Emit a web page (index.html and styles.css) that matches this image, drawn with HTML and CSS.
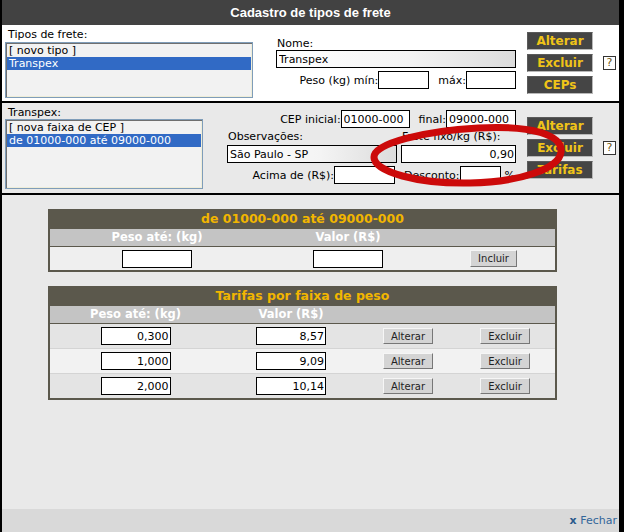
FILE: index.html
```html
<!DOCTYPE html>
<html lang="pt-BR">
<head>
<meta charset="utf-8">
<title>Cadastro de tipos de frete</title>
<link rel="stylesheet" href="styles.css">
</head>
<body>
<div class="window">
  <div class="titlebar">Cadastro de tipos de frete</div>

  <div class="sec sec1">
    <div class="listcol lc1">
      <div class="lbl">Tipos de frete:</div>
      <div class="listbox lb1">
        <div class="opt">[ novo tipo ]</div>
        <div class="opt sel">Transpex</div>
      </div>
    </div>
    <div class="form1">
      <div class="lbl">Nome:</div>
      <input class="txt nome grad" type="text" value="Transpex">
      <div class="row right r2">
        <span>Peso (kg) mín:</span><input class="txt w51" type="text" value="">
        <span class="ml">máx:</span><input class="txt w50" type="text" value="">
      </div>
    </div>
    <div class="btncol bc1">
      <button class="dbtn">Alterar</button>
      <button class="dbtn">Excluir</button>
      <button class="dbtn">CEPs</button>
    </div>
    <span class="help h1">?</span>
  </div>

  <div class="sec sec2">
    <div class="listcol lc2">
      <div class="lbl">Transpex:</div>
      <div class="listbox lb2">
        <div class="opt">[ nova faixa de CEP ]</div>
        <div class="opt sel">de 01000-000 até 09000-000</div>
      </div>
    </div>
    <div class="form2">
      <div class="row right">
        <span>CEP inicial:</span><input class="txt w69" type="text" value="01000-000">
        <span class="ml">final:</span><input class="txt w70" type="text" value="09000-000">
      </div>
      <div class="row rb">
        <div class="fld obs">
          <div class="lbl">Observações:</div>
          <input class="txt grad w170" type="text" value="São Paulo - SP">
        </div>
        <div class="fld frete">
          <div class="lbl">Frete fixo/kg (R$):</div>
          <input class="txt num w115" type="text" value="0,90">
        </div>
      </div>
      <div class="row right rc">
        <span>Acima de (R$):</span><input class="txt w61" type="text" value="">
        <span class="ml">Desconto:</span><input class="txt w41" type="text" value="">
        <span class="pct">%</span>
      </div>
    </div>
    <div class="btncol bc2">
      <button class="dbtn">Alterar</button>
      <button class="dbtn">Excluir</button>
      <button class="dbtn">Tarifas</button>
    </div>
    <span class="help h2">?</span>
  </div>

  <div class="sec sec3">
    <div class="tbl">
      <div class="thead">de 01000-000 até 09000-000</div>
      <div class="grid g3 sub"><div>Peso até: (kg)</div><div>Valor (R$)</div><div></div></div>
      <div class="grid g3 trow t1row">
        <input class="txt tnum" type="text" value="">
        <input class="txt tnum" type="text" value="">
        <button class="sbtn inc">Incluir</button>
      </div>
    </div>

    <div class="tbl tbl2">
      <div class="thead">Tarifas por faixa de peso</div>
      <div class="grid g4 sub"><div>Peso até: (kg)</div><div>Valor (R$)</div><div></div><div></div></div>
      <div class="grid g4 trow odd">
        <input class="txt tnum" type="text" value="0,300">
        <input class="txt tnum" type="text" value="8,57">
        <button class="sbtn">Alterar</button>
        <button class="sbtn">Excluir</button>
      </div>
      <div class="grid g4 trow even">
        <input class="txt tnum" type="text" value="1,000">
        <input class="txt tnum" type="text" value="9,09">
        <button class="sbtn">Alterar</button>
        <button class="sbtn">Excluir</button>
      </div>
      <div class="grid g4 trow odd">
        <input class="txt tnum" type="text" value="2,000">
        <input class="txt tnum" type="text" value="10,14">
        <button class="sbtn">Alterar</button>
        <button class="sbtn">Excluir</button>
      </div>
    </div>
  </div>

  <div class="footer"><b class="x">x</b>&nbsp;Fechar</div>

  <svg class="mark" width="624" height="532" viewBox="0 0 624 532" aria-hidden="true">
    <path d="M 374 157 C 374 143, 425 131, 478 128 C 532 125, 563 135, 561 152 C 559 169, 520 182, 470 183 C 418 184, 374 172, 374 157 Z" fill="none" stroke="#cc0a0a" stroke-width="7"/>
  </svg>
</div>
</body>
</html>
```
FILE: styles.css
```css
* { box-sizing: border-box; }
html, body { margin: 0; padding: 0; }
body {
  width: 624px;
  height: 532px;
  overflow: hidden;
  background: #fff;
  font-family: "DejaVu Sans", Verdana, sans-serif;
  font-size: 11px;
  line-height: 13px;
  color: #000;
}
.window {
  position: relative;
  width: 624px;
  height: 532px;
  border-left: 2px solid #000;
  border-right: 5px solid #000;
  display: flex;
  flex-direction: column;
}
.titlebar {
  height: 25px;
  flex: none;
  background: #424242;
  color: #fff;
  font-family: "Liberation Sans", Arial, sans-serif;
  font-weight: bold;
  font-size: 13px;
  line-height: 25px;
  text-align: center;
}
.sec { flex: none; display: flex; align-items: flex-start; }
.sec1 { height: 78px; background: #fff; border-bottom: 2px solid #000; }
.sec2 { height: 92px; background: #e9e9e9; border-bottom: 2px solid #000; }
.sec3 {
  height: 314px;
  background: #e9e9e9;
  flex-direction: column;
  padding: 14px 0 0 46px;
}
.lbl { height: 13px; white-space: nowrap; }

/* list boxes */
.listcol { margin-left: 3px; }
.listcol .lbl { padding-left: 3px; }
.lc1 { width: 248px; margin-top: 3px; }
.lc2 { width: 198px; margin-top: 3px; }
.listbox {
  border: 1px solid #7f9db9;
  background: #f2f2f2;
  padding: 1px;
  box-shadow: inset 1px 1px 0 #6f6f6f, inset -1px -1px 0 #efedd8;
}
.lb1 { height: 56px; margin-top: 1px; }
.lb2 { height: 70px; }
.opt { height: 13px; padding-left: 2px; white-space: nowrap; }
.opt.sel { background: #316ac5; color: #fff; }

/* text fields */
.txt {
  height: 18px;
  margin: 0;
  border: 1px solid #000;
  padding: 0 2px;
  background: #fff;
  font-family: "DejaVu Sans", Verdana, sans-serif;
  font-size: 11px;
  color: #000;
  outline: none;
}
.grad { background: linear-gradient(to right, #ffffff 0%, #f4f4f4 55%, #dcdcdc 100%); }
.num { text-align: right; padding-right: 1px; }
.nome { width: 240px; display: block; }
.w51 { width: 51px; }
.w50 { width: 50px; }
.w69 { width: 69px; }
.w70 { width: 70px; }
.w61 { width: 61px; }
.w41 { width: 41px; }
.w170 { width: 170px; }
.w115 { width: 115px; }

.row { display: flex; align-items: center; white-space: nowrap; }
.row.right { justify-content: flex-end; }
.ml { margin-left: 9px; }
.pct { margin-left: 4px; margin-right: 1px; }

.form1 { width: 240px; margin-left: 23px; margin-top: 12px; }
.form1 > .lbl { padding-left: 1px; }
.r2 { margin-top: 3px; }
.form2 { width: 289px; margin-left: 24px; margin-top: 7px; }
.rb { margin-top: 2px; gap: 4px; align-items: flex-start; }
.fld .txt { display: block; margin-top: 2px; }
.fld .lbl { padding-left: 1px; }
.rc { margin-top: 3px; }

/* dark buttons */
.btncol { width: 66px; margin-left: 11px; display: flex; flex-direction: column; gap: 4px; }
.bc1 { margin-top: 7px; }
.bc2 { margin-top: 14px; }
.dbtn {
  width: 66px;
  height: 18px;
  margin: 0;
  padding: 0;
  background: #454545;
  border: 1px solid;
  border-color: #5a5a5a #b8b8b8 #b8b8b8 #5a5a5a;
  color: #f0c418;
  font-family: "DejaVu Sans", Verdana, sans-serif;
  font-weight: bold;
  font-size: 12px;
  line-height: 15px;
  text-align: center;
}
.help {
  width: 13px;
  height: 14px;
  margin-left: 10px;
  border: 1px solid #333;
  background: #fff;
  color: #6b5510;
  font-size: 11px;
  line-height: 12px;
  text-align: center;
}
.h1 { margin-top: 31px; }
.h2 { margin-top: 38px; }

/* tables */
.tbl {
  width: 509px;
  border: 2px solid #5b584c;
  border-top: 0;
  flex: none;
}
.tbl2 { margin-top: 14px; }
.thead {
  height: 20px;
  background: #5b584c;
  color: #f2b600;
  font-weight: bold;
  font-size: 12.5px;
  line-height: 20px;
  text-align: center;
}
.grid { display: grid; align-items: center; justify-items: center; }
.g3 { grid-template-columns: 214px 168px 1fr; }
.g4 { grid-template-columns: 171px 140px 94px 1fr; }
.sub {
  height: 18px;
  background: #c4c4c4;
  border-bottom: 1px solid #5b584c;
  color: #fff;
  font-weight: bold;
  font-size: 11.5px;
  line-height: 17px;
}
.trow { height: 24px; }
.t1row { height: 23px; background: #efefef; }
.odd { background: #e4e4e4; }
.even { background: #f2f2f2; }
.trow + .trow { height: 25px; border-top: 1px solid #d4d4d4; }
.tnum { width: 70px; text-align: right; padding: 0 1px; }
.sbtn {
  width: 50px;
  height: 16px;
  margin: 0;
  padding: 0;
  background: #d4d4d4;
  border: 1px solid;
  border-color: #f6f6f6 #777 #777 #f6f6f6;
  color: #222;
  font-family: "DejaVu Sans", Verdana, sans-serif;
  font-size: 10px;
  line-height: 13px;
  text-align: center;
}
.sbtn.inc { width: 47px; height: 17px; }

/* footer */
.footer {
  height: 23px;
  flex: none;
  background: #d9d9d9;
  display: flex;
  justify-content: flex-end;
  align-items: center;
  padding-right: 2px;
  color: #336699;
}
.x { color: #2a5a8c; }

.mark {
  position: absolute;
  left: -2px;
  top: 0;
  pointer-events: none;
}
```
